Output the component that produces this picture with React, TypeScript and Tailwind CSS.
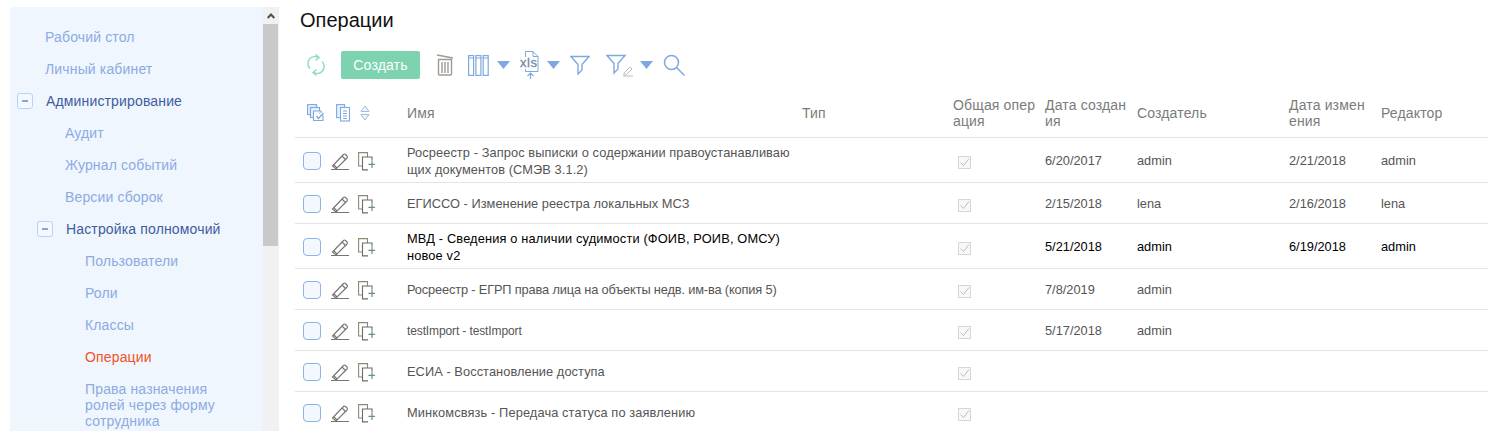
import React from "react";

const Minus = () => (
  <span className="w-4 h-4 mr-[13px] shrink-0 rounded-[3px] border border-[#b5d3fb] bg-[#f5f9ff] flex items-center justify-center">
    <span className="block w-[6px] h-[2px] bg-[#7fa8e0]" />
  </span>
);

const nav: { t: string; pl: string; tone?: "dark" | "active"; tog?: boolean }[] = [
  { t: "Рабочий стол", pl: "pl-[35px]" },
  { t: "Личный кабинет", pl: "pl-[35px]" },
  { t: "Администрирование", pl: "pl-[7px]", tone: "dark", tog: true },
  { t: "Аудит", pl: "pl-[55px]" },
  { t: "Журнал событий", pl: "pl-[55px]" },
  { t: "Версии сборок", pl: "pl-[55px]" },
  { t: "Настройка полномочий", pl: "pl-[27px]", tone: "dark", tog: true },
  { t: "Пользователи", pl: "pl-[75px]" },
  { t: "Роли", pl: "pl-[75px]" },
  { t: "Классы", pl: "pl-[75px]" },
  { t: "Операции", pl: "pl-[75px]", tone: "active" },
];

const Refresh = () => (
  <svg width="20" height="24" viewBox="0 0 20 24" fill="none" stroke="#8fdcc4" strokeWidth="1.5">
    <path d="M4 15.5 A7 7 0 0 1 12.5 4.5" />
    <path d="M16 8.5 A7 7 0 0 1 7.5 19.5" />
    <path d="M9.5 1.5 L13 4.5 L9.5 7.5" />
    <path d="M10.5 22.5 L7 19.5 L10.5 16.5" />
  </svg>
);
const Trash = () => (
  <svg width="18" height="24" viewBox="0 0 18 24" fill="none" stroke="#a09a95" strokeWidth="1.4">
    <path d="M1 2 L17 5" />
    <path d="M2.5 6.5 H15.5 V21 Q15.5 22 14.5 22 H3.5 Q2.5 22 2.5 21 Z" />
    <path d="M6 9 V20 M9 9 V20 M12 9 V20" />
  </svg>
);
const Columns = () => (
  <svg width="21" height="21" viewBox="0 0 21 21" fill="none" stroke="#7ea8e2" strokeWidth="1.2">
    <rect x=".6" y=".6" width="5" height="19.8" />
    <rect x="7.9" y=".6" width="5" height="19.8" />
    <rect x="15.2" y=".6" width="5" height="19.8" />
    <path d="M0 3 H6 M7.3 3 H13.5 M14.6 3 H21" />
  </svg>
);
const Caret = () => (
  <svg width="13" height="8" viewBox="0 0 13 8" fill="#7ea8e2"><path d="M0 0 H13 L6.5 8 Z" /></svg>
);
const Xls = () => (
  <svg width="19" height="28" viewBox="0 0 19 28" fill="none" stroke="#7ea8e2" strokeWidth="1">
    <path d="M5.5 6 V.5 H13 L18 5.5 V20.5 H5.5 V18" />
    <path d="M13 .5 V5.5 H18" />
    <path d="M10.5 28 V22 M7.5 25 L10.5 22 L13.5 25" strokeWidth="1.2" />
    <text x="0" y="16" fontSize="13" fontFamily="Liberation Sans" fill="#7388a6" stroke="#7388a6" strokeWidth="0.3" textLength="17">xls</text>
  </svg>
);
const Filter = () => (
  <svg width="20" height="20" viewBox="0 0 20 20" fill="none" stroke="#7ea8e2" strokeWidth="1.4">
    <path d="M1 1.5 H19 L12 9.5 V15 L8 19 V9.5 Z" />
  </svg>
);
const FilterEdit = () => (
  <svg width="34" height="24" viewBox="0 0 34 24" fill="none">
    <path d="M1 2.5 H19 L12 10.5 V16 L8 20 V10.5 Z" stroke="#7ea8e2" strokeWidth="1.4" />
    <path d="M18 20 L24 14 L26 16 L20 22 H18 Z M17 23 H27" stroke="#b9bec6" strokeWidth="1" />
  </svg>
);
const Search = () => (
  <svg width="22" height="22" viewBox="0 0 22 22" fill="none" stroke="#7ea8e2" strokeWidth="1.5">
    <circle cx="8.5" cy="8.5" r="7" />
    <path d="M13.5 13.5 L21.5 21.5" />
  </svg>
);
const SelectAll = () => (
  <svg width="18" height="18" viewBox="0 0 18 18" fill="none" stroke="#7ea8e2" strokeWidth="1.1">
    <rect x=".6" y=".6" width="9" height="10" fill="#e6f0ff" />
    <rect x="3.5" y="3.5" width="9" height="10" fill="#e6f0ff" />
    <path d="M6.5 7 H14 V9 M6.5 7 V16.5 H16 V11" fill="#fff" />
    <path d="M9.5 12 L11.5 14.5 L16.5 9" strokeWidth="1.4" />
  </svg>
);
const Docs = () => (
  <svg width="14" height="18" viewBox="0 0 14 18" fill="none" stroke="#7ea8e2" strokeWidth="1.1">
    <rect x=".6" y=".6" width="8" height="13" fill="#e6f0ff" />
    <rect x="4.5" y="3.5" width="9" height="13.5" fill="#fff" />
    <path d="M7 7 H11 M7 9.5 H11 M7 12 H11 M7 14.5 H11" />
  </svg>
);
const Sort = () => (
  <svg width="10" height="16" viewBox="0 0 10 16" fill="#f1f6fe" stroke="#9fbce6" strokeWidth="1">
    <path d="M1 6.5 L5 1 L9 6.5 Z M1 9.5 L5 15 L9 9.5 Z" />
  </svg>
);
const Pencil = () => (
  <svg width="18" height="18" viewBox="0 0 18 18" fill="none" stroke="#77736f" strokeWidth="1.1">
    <path d="M1.5 14 L12.5 2.5 Q13.5 1.5 14.5 2.5 L16 4 Q17 5 16 6 L5 17 Z" />
    <path d="M11 4 L15 8 M3 13 L6 16" />
    <path d="M0 17.5 H18" strokeWidth="1" />
  </svg>
);
const CopyAdd = () => (
  <svg width="17" height="19" viewBox="0 0 17 19" fill="none" stroke="#6f6b68" strokeWidth="1.1">
    <path d="M9.5 5 V.6 H.6 V14 H4.5" stroke="#8d8a72" />
    <path d="M10 17.9 H4.5 V5 H14 V8.5" />
    <path d="M14 8.8 V16 M10.4 12.4 H17" stroke="#6c8f78" strokeWidth="1.2" />
  </svg>
);
const Check = () => (
  <span className="w-[13px] h-[13px] border border-[#d6d6d6] bg-[#f8f8f8] flex items-center justify-center">
    <svg width="11" height="11" viewBox="0 0 11 11" fill="none" stroke="#bdbdbd" strokeWidth="1"><path d="M1.5 5.5 L4.5 8.5 L10 1.5" /></svg>
  </span>
);

const rows = [
  { n: "Росреестр - Запрос выписки о содержании правоустанавливаю\nщих документов (СМЭВ 3.1.2)", d: "6/20/2017", c: "admin", m: "2/21/2018", e: "admin", h: "h-[45px]", tr: "pt-[1px] tracking-[0.09px]" },
  { n: "ЕГИССО - Изменение реестра локальных МСЗ", d: "2/15/2018", c: "lena", m: "2/16/2018", e: "lena", h: "h-[41px]", tr: "pt-[1px] tracking-[0.03px]" },
  { n: "МВД - Сведения о наличии судимости (ФОИВ, РОИВ, ОМСУ)\nновое v2", d: "5/21/2018", c: "admin", m: "6/19/2018", e: "admin", h: "h-[45px]", dark: true, tr: "pt-[1px] tracking-[0.16px]" },
  { n: "Росреестр - ЕГРП права лица на объекты недв. им-ва (копия 5)", d: "7/8/2019", c: "admin", m: "", e: "", h: "h-[41px]", tr: "pt-[1px] tracking-[-0.15px]" },
  { n: "testImport - testImport", d: "5/17/2018", c: "admin", m: "", e: "", h: "h-[41px]", tr: "pt-[3px] text-[12px] tracking-[-0.12px]" },
  { n: "ЕСИА - Восстановление доступа", d: "", c: "", m: "", e: "", h: "h-[41px]", tr: "pt-[1px] tracking-[0.07px]" },
  { n: "Минкомсвязь - Передача статуса по заявлению", d: "", c: "", m: "", e: "", h: "h-[41px]", tr: "pt-[1px] tracking-[0.12px]" },
];

const cols = "grid grid-cols-[112px_395px_151px_92px_92px_152px_92px_1fr]";

export default function App() {
  return (
    <div className="w-[1488px] h-[431px] overflow-hidden bg-white flex font-['Liberation_Sans',Arial,sans-serif]">
      <aside className="ml-[10px] mt-[7px] w-[253px] h-[424px] shrink-0 rounded-tl-[4px] bg-[#eff6fe] pt-[14px] text-[14px] leading-[16px] tracking-[0.15px] text-[#8cabe2]">
        {nav.map((i) => (
          <div key={i.t} className={`h-[32px] flex items-center ${i.pl}`}>
            {i.tog && <Minus />}
            <span className={i.tone === "dark" ? "text-[#3e5c9e]" : i.tone === "active" ? "text-[#f4511e]" : ""}>{i.t}</span>
          </div>
        ))}
        <div className="pl-[75px] pr-[40px] pt-[8px]">Права назначения ролей через форму сотрудника</div>
      </aside>
      <div className="w-[16px] h-[424px] mt-[7px] shrink-0 bg-[#f1f1f1] flex flex-col">
        <div className="h-[17px] flex items-center justify-center">
          <svg width="8" height="6" viewBox="0 0 8 6" fill="none" stroke="#505050" strokeWidth="2"><path d="M.7 5 L4 1.5 L7.3 5" /></svg>
        </div>
        <div className="h-[222px] w-[15px] bg-[#c9c9c9]" />
      </div>
      <main className="ml-[16px] flex-1 min-w-0">
        <h1 className="ml-[5px] mt-[8px] text-[20px] leading-[24px] text-[#111]">Операции</h1>
        <div className="h-[40px] mt-[13px] flex items-center text-[#7ea8e2]">
          <span className="ml-[11px]"><Refresh /></span>
          <button className="ml-[15px] w-[79px] h-[28px] rounded-[2px] bg-[#7dd3b0] text-white text-[14px] tracking-[0.15px]">Создать</button>
          <span className="ml-[16px]"><Trash /></span>
          <span className="ml-[14px]"><Columns /></span>
          <span className="ml-[8px]"><Caret /></span>
          <span className="ml-[10px]"><Xls /></span>
          <span className="ml-[8px]"><Caret /></span>
          <span className="ml-[10px]"><Filter /></span>
          <span className="ml-[16px]"><FilterEdit /></span>
          <span className="ml-[0px]"><Caret /></span>
          <span className="ml-[10px]"><Search /></span>
        </div>
        <div className={`${cols} h-[50px] mt-[3px] items-center border-b border-[#e4e4e4] text-[14px] leading-[16px] tracking-[0.15px] text-[#7b7b7b]`}>
          <div className="flex items-center pl-[12px]"><SelectAll /><span className="ml-[11px]"><Docs /></span><span className="ml-[10px]"><Sort /></span></div>
          <div>Имя</div>
          <div>Тип</div>
          <div className="break-all pr-[8px]">Общая операция</div>
          <div className="break-all pr-[4px]">Дата создания</div>
          <div>Создатель</div>
          <div className="break-all pr-[10px]">Дата изменения</div>
          <div>Редактор</div>
        </div>
        {rows.map((r) => (
          <div key={r.n} className={`${cols} ${r.h} items-center border-b border-[#e4e4e4] text-[12.8px] leading-[17px] ${r.dark ? "text-black" : "text-[#555]"}`}>
            <div className="flex items-center pl-[8px] pt-[2px]">
              <span className="w-[18px] h-[18px] rounded-[4px] border border-[#8db4e8] bg-[#f3f8ff]" />
              <span className="ml-[10px]"><Pencil /></span>
              <span className="ml-[9px]"><CopyAdd /></span>
            </div>
            <div className={`whitespace-pre-line ${r.tr}`}>{r.n}</div>
            <div />
            <div className="pl-[5px] pt-[4px]"><Check /></div>
            <div className="pt-[1px]">{r.d}</div>
            <div className="pt-[1px]">{r.c}</div>
            <div className="pt-[1px]">{r.m}</div>
            <div className="pt-[1px]">{r.e}</div>
          </div>
        ))}
      </main>
    </div>
  );
}
